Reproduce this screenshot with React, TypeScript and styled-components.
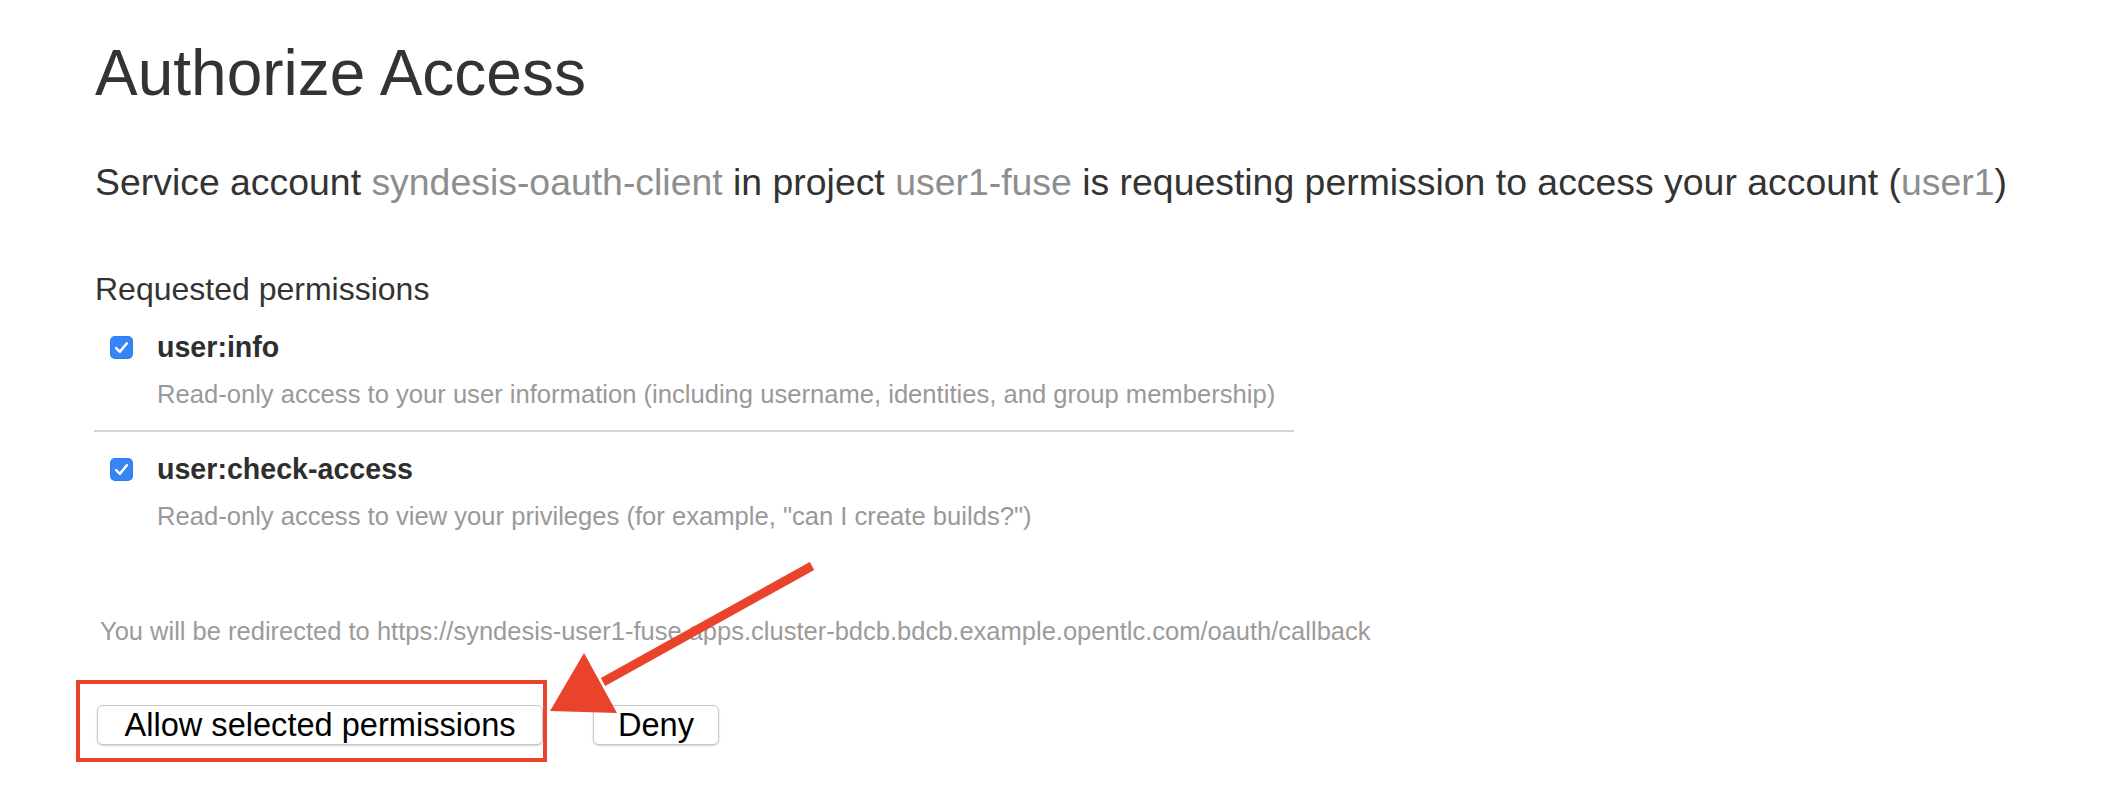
import React from "react";
import styled, { createGlobalStyle } from "styled-components";

const Global = createGlobalStyle`
  html, body { margin: 0; padding: 0; background: #ffffff; }
  body {
    font-family: "Liberation Sans", Arial, Helvetica, sans-serif;
    color: #333333;
  }
`;

const Page = styled.main`
  position: relative;
  width: 2118px;
  height: 808px;
  box-sizing: border-box;
  padding: 38px 0 0 95px;
  overflow: hidden;
`;

const Title = styled.h1`
  margin: 0;
  font-size: 64px;
  line-height: 70px;
  font-weight: 400;
  color: #333333;
`;

const Lead = styled.p`
  margin: 52px 0 0;
  font-size: 37.4px;
  line-height: 44px;
  color: #333333;
  white-space: nowrap;
`;

const Muted = styled.span`
  color: #8e8e8e;
`;

const SectionTitle = styled.h3`
  margin: 66px 0 0;
  font-size: 32px;
  line-height: 38px;
  font-weight: 400;
  color: #333333;
`;

const PermissionList = styled.ul`
  list-style: none;
  margin: 2px 0 0 -1px;
  padding: 0;
  width: 1200px;
`;

const PermissionItem = styled.li<{ $divider?: boolean }>`
  display: grid;
  grid-template-columns: 23px 1fr;
  column-gap: 24px;
  row-gap: 14px;
  align-items: center;
  padding: 20px 0 20px 16px;
  border-bottom: ${(p) => (p.$divider ? "2px solid #d5d5d5" : "none")};
`;

const CheckBox = styled.span`
  width: 23px;
  height: 23px;
  border-radius: 5px;
  background: #3585f7;
  display: flex;
  align-items: center;
  justify-content: center;
  box-shadow: inset 0 0 0 1px rgba(0, 0, 0, 0.06);
`;

const PermName = styled.span`
  font-size: 28.6px;
  line-height: 34px;
  font-weight: 700;
  color: #2e2e2e;
`;

const PermDesc = styled.span`
  grid-column: 2;
  font-size: 25.6px;
  line-height: 32px;
  color: #999999;
  white-space: nowrap;
`;

const Redirect = styled.p`
  margin: 64px 0 0;
  padding-left: 5px;
  font-size: 25.5px;
  line-height: 30px;
  color: #9b9b9b;
  white-space: nowrap;
`;

const Actions = styled.div`
  margin-top: 59px;
  padding-left: 2px;
  display: flex;
  align-items: center;
  gap: 50px;
`;

const Highlight = styled.span`
  position: relative;
  display: inline-flex;
  &::before {
    content: "";
    position: absolute;
    top: -25px;
    bottom: -17px;
    left: -21px;
    right: -4px;
    border: 4px solid #e9432b;
    pointer-events: none;
  }
`;

const Button = styled.button<{ $width: number }>`
  width: ${(p) => p.$width}px;
  height: 40px;
  padding: 0;
  background: #ffffff;
  border: 1px solid #c9c9c9;
  border-radius: 6px;
  box-shadow: 0 1px 2px rgba(0, 0, 0, 0.18);
  font-family: "Liberation Sans", Arial, Helvetica, sans-serif;
  font-size: 32.6px;
  line-height: 38px;
  color: #000000;
  text-align: center;
  cursor: pointer;
`;

const Annotation = styled.svg`
  position: absolute;
  top: 0;
  left: 0;
  pointer-events: none;
`;

const Check = () => (
  <svg width="15" height="13" viewBox="0 0 14 12" aria-hidden="true">
    <polyline
      points="2,6.5 5.5,10 12,2"
      fill="none"
      stroke="#ffffff"
      strokeWidth="2.3"
      strokeLinecap="round"
      strokeLinejoin="round"
    />
  </svg>
);

const permissions = [
  {
    name: "user:info",
    desc: "Read-only access to your user information (including username, identities, and group membership)",
  },
  {
    name: "user:check-access",
    desc: 'Read-only access to view your privileges (for example, "can I create builds?")',
  },
];

export default function App() {
  return (
    <>
      <Global />
      <Page>
        <Title>Authorize Access</Title>
        <Lead>
          Service account <Muted>syndesis-oauth-client</Muted> in project{" "}
          <Muted>user1-fuse</Muted> is requesting permission to access your account (
          <Muted>user1</Muted>)
        </Lead>
        <SectionTitle>Requested permissions</SectionTitle>
        <PermissionList>
          {permissions.map((p, i) => (
            <PermissionItem key={p.name} $divider={i < permissions.length - 1}>
              <CheckBox>
                <Check />
              </CheckBox>
              <PermName>{p.name}</PermName>
              <PermDesc>{p.desc}</PermDesc>
            </PermissionItem>
          ))}
        </PermissionList>
        <Redirect>
          You will be redirected to
          https://syndesis-user1-fuse.apps.cluster-bdcb.bdcb.example.opentlc.com/oauth/callback
        </Redirect>
        <Actions>
          <Highlight>
            <Button $width={446}>Allow selected permissions</Button>
          </Highlight>
          <Button $width={126}>Deny</Button>
        </Actions>
        <Annotation width="2118" height="808" viewBox="0 0 2118 808">
          <line
            x1="812"
            y1="566"
            x2="603"
            y2="682"
            stroke="#e9432b"
            strokeWidth="9"
            strokeLinecap="butt"
          />
          <polygon points="550,711 617,713 584,653" fill="#e9432b" />
        </Annotation>
      </Page>
    </>
  );
}
